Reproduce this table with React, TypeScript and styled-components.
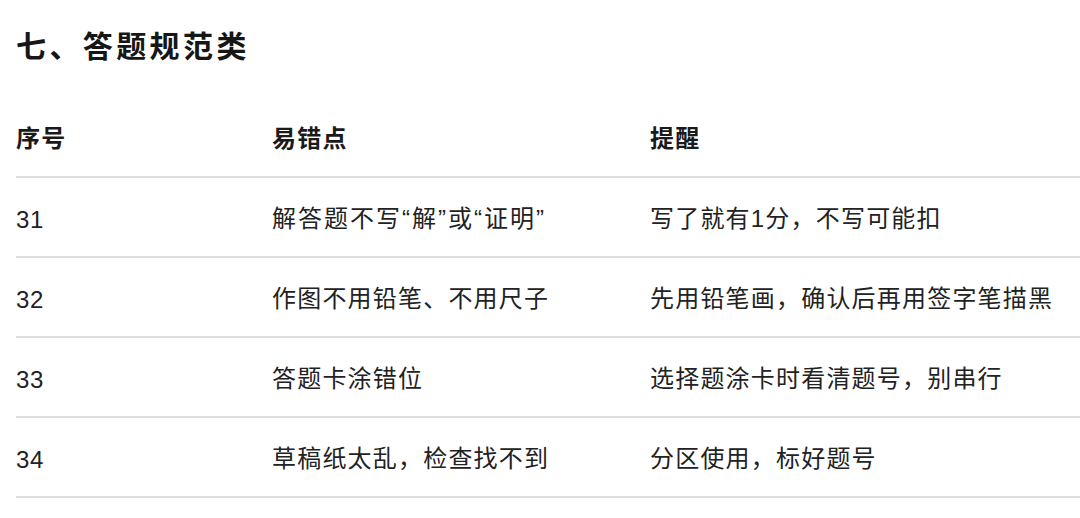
import React from "react";
import styled, { createGlobalStyle } from "styled-components";

const Global = createGlobalStyle`
  html, body { margin: 0; padding: 0; background: #ffffff; }
  body {
    font-family: "Liberation Sans", "Noto Sans CJK SC", "Noto Sans", sans-serif;
    color: #1f1f1f;
    -webkit-font-smoothing: antialiased;
  }
`;

const Page = styled.div`
  padding-left: 16px;
  overflow: hidden;
  width: 1080px;
  box-sizing: border-box;
`;

const Title = styled.h2`
  margin: 0;
  padding: 27px 0 31px;
  font-size: 30px;
  line-height: 40px;
  font-weight: 700;
  letter-spacing: 3.4px;
  color: #161616;
`;

const Row = styled.div<{ $head?: boolean }>`
  display: grid;
  grid-template-columns: 256px 378px 1fr;
  align-items: center;
  height: 80px;
  padding-top: 3px;
  box-sizing: border-box;
  border-bottom: 2px solid #dddddd;
  font-size: 24px;
  line-height: 32px;
  letter-spacing: 1.2px;
  font-weight: ${(p) => (p.$head ? 600 : 400)};
  color: ${(p) => (p.$head ? "#1a1a1a" : "#222222")};
`;

const Cell = styled.div`
  white-space: nowrap;
`;

const Quoted = styled.span`
  letter-spacing: 2px;
`;

const Num = styled.span`
  letter-spacing: 0.6px;
  vertical-align: -2px;
`;

const rows = [
  { n: "31", a: "解答题不写“解”或“证明”", b: "写了就有1分，不写可能扣" },
  { n: "32", a: "作图不用铅笔、不用尺子", b: "先用铅笔画，确认后再用签字笔描黑" },
  { n: "33", a: "答题卡涂错位", b: "选择题涂卡时看清题号，别串行" },
  { n: "34", a: "草稿纸太乱，检查找不到", b: "分区使用，标好题号" },
];

export default function App() {
  return (
    <>
      <Global />
      <Page>
        <Title>七、答题规范类</Title>
        <Row $head>
          <Cell>序号</Cell>
          <Cell>易错点</Cell>
          <Cell>提醒</Cell>
        </Row>
        {rows.map((r) => (
          <Row key={r.n}>
            <Cell>
              <Num>{r.n}</Num>
            </Cell>
            <Cell>{r.a.includes("“") ? <Quoted>{r.a}</Quoted> : r.a}</Cell>
            <Cell>{r.b}</Cell>
          </Row>
        ))}
      </Page>
    </>
  );
}
